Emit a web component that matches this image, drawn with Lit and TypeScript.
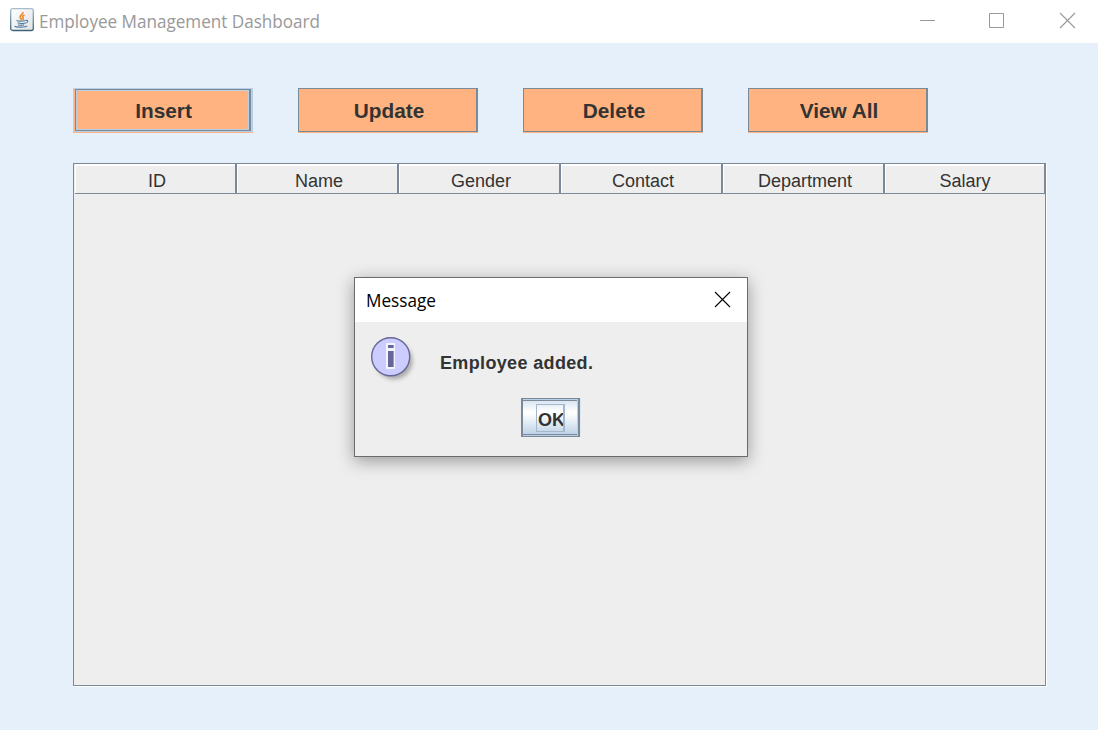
import { LitElement, html, css } from "lit";
import { customElement, property } from "lit/decorators.js";

@customElement("title-bar")
class TitleBar extends LitElement {
  static styles = css`
    :host { display: flex; height: 43px; background: #fff; box-sizing: border-box; padding: 8px 22px 0 10px; }
    .logo { width: 24px; height: 24px; display: block; }
    .title { margin: 2px 0 0 5px; }
    .fit { display: block; width: 282px; height: 26px; overflow: visible; }
    .fit text { font-family: "Open Sans", "Noto Sans", sans-serif; font-size: 18px; fill: #999; }
    .controls { margin-left: auto; display: flex; padding-top: 4px; }
    .controls svg { display: block; width: 17px; height: 17px; }
    .min { margin-right: 52px; }
    .max { margin-right: 54px; }
  `;
  render() {
    return html`
      <svg class="logo" viewBox="0 0 24 24">
        <defs>
          <linearGradient id="f" x1="0" y1="0" x2="0" y2="1"><stop offset="0" stop-color="#a9bccb"/><stop offset="1" stop-color="#3f6278"/></linearGradient>
          <linearGradient id="g" x1="0" y1="0" x2="1" y2="1"><stop offset="0" stop-color="#fff"/><stop offset="1" stop-color="#dfe2e5"/></linearGradient>
        </defs>
        <rect x=".7" y=".7" width="22.6" height="21.8" rx="2" fill="url(#g)" stroke="url(#f)" stroke-width="1.3"/>
        <path d="M13 4c.4 2.500-3.700 3.200-2.900 5.300.3 1 1.200 1.500 1.500 2.700M14.500 7c-2.600 1-2 2-1.400 3 .4.700.2 1.300-.3 1.800" fill="none" stroke="#ee8a2b" stroke-width="1.7"/>
        <path d="M6.500 12.600c2 .8 7 .7 9 0M7.500 14.800c2 .8 6 .7 7.600.1M8 16.700c2 .7 4.800.6 6.200 0M15.800 12.500c2.800-.8 2.600 2-.5 2.800M4.500 18.300c2 1.300 11 1 12.700-.3" fill="none" stroke="#527a9b" stroke-width="1.100"/>
      </svg>
      <div class="title"><svg class="fit"><text x="0" y="18" textLength="281" lengthAdjust="spacingAndGlyphs">Employee Management Dashboard</text></svg></div>
      <div class="controls">
        <svg class="min" viewBox="0 0 17 17"><path d="M1 8.500h15" stroke="#999"/></svg>
        <svg class="max" viewBox="0 0 17 17"><path d="M1.500 1.500h14v14h-14z" fill="none" stroke="#999"/></svg>
        <svg viewBox="0 0 17 17"><path d="M1 1l15 15M16 1L1 16" stroke="#999" stroke-width="1.100"/></svg>
      </div>`;
  }
}

@customElement("metal-button")
class MetalButton extends LitElement {
  @property() label = "";
  @property({ type: Boolean }) focused = false;
  static styles = css`
    :host { display: block; width: 180px; height: 45px; }
    button { display: block; width: 180px; height: 45px; margin: 0; padding: 0; box-sizing: border-box; background: #ffb380; border: 0; border-radius: 0; border-bottom: 1px solid #ffb380; color: #333; font: bold 20.800px/45px "Liberation Sans", Arial, sans-serif; }
    .face { display: block; height: 44px; box-sizing: border-box; border: solid #7a8a99; border-width: 1px 2px 1px 1px; padding-left: 3px; line-height: 44px; }
    .focused { border: solid #b8cfe5; border-width: 1px 2px 1px 1px; padding-left: 1px; }
    .ring { display: block; height: 42px; box-sizing: border-box; border: solid #7a8a99; border-width: 1px 2px 1px 1px; }
    .inner { display: block; height: 40px; box-sizing: border-box; border: 1px solid #b8cfe5; line-height: 40px; padding-left: 2px; }
  `;
  render() {
    return this.focused
      ? html`<button><span class="face focused"><span class="ring"><span class="inner">${this.label}</span></span></span></button>`
      : html`<button><span class="face">${this.label}</span></button>`;
  }
}

@customElement("employee-table")
class EmployeeTable extends LitElement {
  columns = ["ID", "Name", "Gender", "Contact", "Department", "Salary"];
  static styles = css`
    :host { display: block; box-sizing: border-box; height: 523px; background: #eee; border: 1px solid #7a8a99; box-shadow: 1px 1px 0 #fff; }
    .head { display: grid; grid-template-columns: repeat(5, 162px) 161px; grid-template-rows: 30px; padding-left: 1px; height: 30px; }
    .cell { height: 30px; box-sizing: border-box; border: solid #7a8a99; border-width: 0 2px 1px 0; box-shadow: inset 1px 2px 0 #fff; text-align: center; font: 18px/34px "Liberation Sans", Arial, sans-serif; color: #333; padding-left: 4px; }
    .cell:last-child { padding-left: 1px; }
  `;
  render() {
    return html`<div class="head">${this.columns.map((c) => html`<div class="cell">${c}</div>`)}</div>`;
  }
}

@customElement("message-dialog")
class MessageDialog extends LitElement {
  static styles = css`
    :host { display: block; box-sizing: border-box; width: 394px; height: 180px; border: 1px solid #6b6b6b; background: #eee; box-shadow: 0 4px 16px rgba(0, 0, 0, .36); }
    .bar { display: flex; justify-content: space-between; background: #fff; height: 44px; box-sizing: border-box; padding: 9px 16px 0 11px; }
    .close { display: block; margin-top: 4px; width: 17px; height: 17px; }
    .caption { display: block; width: 72px; height: 26px; overflow: visible; }
    .caption text { font-family: "Open Sans", "Noto Sans", sans-serif; font-size: 17.500px; fill: #000; }
    .body { display: flex; height: 76px; box-sizing: border-box; padding: 14px 0 0 15px; }
    .info { display: block; width: 48px; height: 48px; }
    .text { margin: 15px 0 0 22px; font: bold 18px/24px "Liberation Sans", Arial, sans-serif; letter-spacing: .35px; color: #333; white-space: nowrap; }
    .foot { display: flex; padding-left: 166px; }
    .ok { width: 59px; height: 39px; box-sizing: border-box; margin: 0; padding: 1px 1px 1px 0; border: solid #7a8a99; border-width: 1px 2px 1px 2px; border-radius: 0; background: #b8cfe5; box-shadow: 1px 0 0 #dce8f3; }
    .fill { display: flex; height: 35px; box-sizing: border-box; border: solid #7a8a99; border-width: 1px 0 1px 0; background: linear-gradient(#d9e6f1, #fff 32%, #fff 38%, #bfd3e6); padding: 3px 0 0 13px; }
    .label { width: 29px; height: 28px; box-sizing: border-box; border: solid #a3b8cc; border-width: 1px 2px 1px 1px; overflow: hidden; text-align: left; font: bold 18px/30px "Liberation Sans", Arial, sans-serif; color: #333; padding-left: 1px; }
  `;
  render() {
    return html`
      <div class="bar">
        <svg class="caption"><text x="0" y="20" textLength="70" lengthAdjust="spacingAndGlyphs">Message</text></svg>
        <svg class="close" viewBox="0 0 17 17"><path d="M1 1l15 15M16 1L1 16" stroke="#000" stroke-width="1.100"/></svg>
      </div>
      <div class="body">
        <svg class="info" viewBox="0 0 48 48">
          <defs><filter id="b" x="-30%" y="-30%" width="160%" height="160%"><feGaussianBlur stdDeviation="2"/></filter></defs>
          <circle cx="24" cy="25" r="18.500" fill="#666" opacity=".5" filter="url(#b)"/>
          <circle cx="20.700" cy="20.700" r="19" fill="#ccf" stroke="#669" stroke-width="1.400"/>
          <path d="M16 7h9v26h-9z" fill="#f4f4ff"/>
          <path d="M18 9h6v3h-6zM18 15h6v16h-6z" fill="#669"/>
          <path d="M23.200 9h.8v3h-.8zM23.200 15h.8v16h-.8z" fill="#a5a5cc"/>
        </svg>
        <div class="text">Employee added.</div>
      </div>
      <div class="foot"><button class="ok"><span class="fill"><span class="label">OK</span></span></button></div>`;
  }
}

@customElement("app-root")
class AppRoot extends LitElement {
  static styles = css`
    :host { display: block; position: relative; width: 1098px; height: 730px; overflow: hidden; background: #e6f0fa; }
    .content { padding: 45px 52px 0 73px; }
    .actions { display: flex; gap: 45px; margin-bottom: 30px; }
    message-dialog { position: absolute; left: 354px; top: 277px; }
  `;
  render() {
    return html`
      <title-bar></title-bar>
      <div class="content">
        <div class="actions">
          <metal-button label="Insert" focused></metal-button>
          <metal-button label="Update"></metal-button>
          <metal-button label="Delete"></metal-button>
          <metal-button label="View All"></metal-button>
        </div>
        <employee-table></employee-table>
      </div>
      <message-dialog></message-dialog>`;
  }
}
